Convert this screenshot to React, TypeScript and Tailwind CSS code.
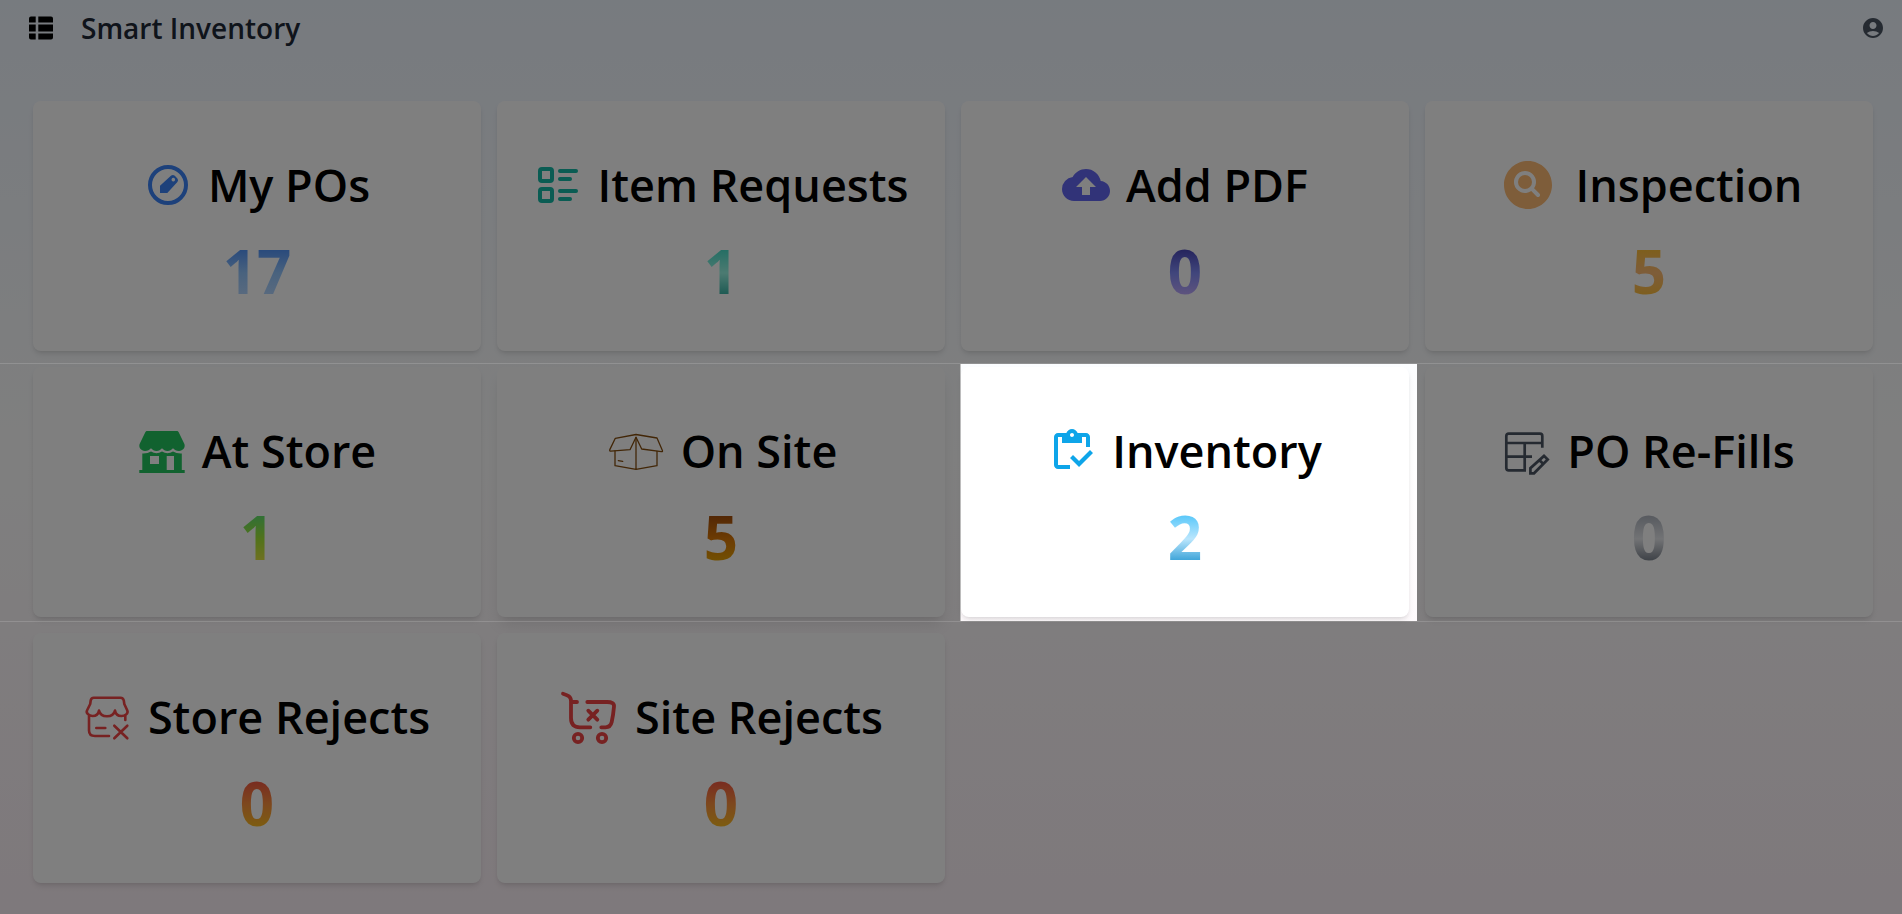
import type { ReactNode } from "react";
import { IoSearchCircle } from "react-icons/io5";
import { MdAccountCircle, MdCloudUpload, MdOutlineInventory } from "react-icons/md";
import { TbListDetails } from "react-icons/tb";

function MenuIcon() {
  return (
    <svg viewBox="0 0 24 24" className="size-6" fill="currentColor" aria-hidden="true">
      <path d="M2 .5h4.7v6H0v-4a2 2 0 0 1 2-2zM9.3 .5H22a2 2 0 0 1 2 2v4H9.3zM0 8.5h6.7v7H0zM9.3 8.5H24v7H9.3zM0 17.5h6.7v6H2a2 2 0 0 1-2-2zM9.3 17.5H24v4a2 2 0 0 1-2 2H9.3z" />
    </svg>
  );
}

function OrderIcon() {
  return (
    <svg viewBox="0 0 48 48" className="size-12 text-[#3b82f6]" aria-hidden="true">
      <circle cx="24" cy="24" r="18" fill="none" stroke="currentColor" strokeWidth="4" />
      <path
        fill="currentColor"
        fillRule="evenodd"
        d="M16 32V24.7L27.2 14.6Q29 13.4 30.8 14.8L33.4 17.4Q34.8 19.2 33.4 21L23.3 32ZM29.3 16.8a1.8 1.8 0 1 0 .01 0z"
      />
    </svg>
  );
}

function StoreIcon() {
  return (
    <svg viewBox="0 0 48 48" className="size-12 text-[#22c55e]" fill="currentColor" aria-hidden="true">
      <path d="M9.3 4h29.4c.9 0 1.6.5 2 1.3L46.4 17c1.2 3.4-1.4 6.9-5.4 6.9-2.6 0-4.6-1-6-2.6-1.4 1.6-3.2 2.6-5.5 2.6S25.4 22.9 24 21.3c-1.4 1.6-3.2 2.6-5.5 2.6s-4.1-1-5.5-2.6c-1.4 1.6-3.4 2.6-6 2.6-4 0-6.6-3.5-5.4-6.9L7.3 5.3C7.7 4.5 8.4 4 9.3 4z" />
      <path
        fillRule="evenodd"
        d="M4.3 26.5Q9.5 26.8 13 24.6Q18.5 27.8 24 24.6Q29.5 27.8 35 24.6Q38.8 26.8 43.8 26.5V43H46.7V46H1.3V43H4.3ZM12 29V37H21V29ZM28.7 29V43H36V29Z"
      />
    </svg>
  );
}

function BoxIcon() {
  return (
    <svg
      viewBox="0 0 60 60"
      className="size-[60px] text-[#854d0e]"
      fill="none"
      stroke="currentColor"
      strokeWidth="1.3"
      strokeLinejoin="round"
      strokeLinecap="round"
      aria-hidden="true"
    >
      <path d="M31 16.3L25 28.7L5.9 30.2Q4.3 30.2 4.8 28.6L10.3 17.3L31 13.5L52 17L57.4 29.4Q57.9 30.9 56.3 30.7L36.7 28Z" />
      <path d="M10 30V44.7L31 48.3L52 44.7V30.3M31 16.3V48.3M13.3 39.7L17.7 40.3" />
    </svg>
  );
}

function RefillIcon() {
  return (
    <svg viewBox="0 0 48 48" className="size-12 text-[#4b5563]" fill="none" stroke="currentColor" strokeWidth="2.7" aria-hidden="true">
      <path d="M39.3 20.7V9Q39.3 6.7 37 6.7H5.7Q3.3 6.7 3.3 9V41Q3.3 43.3 5.7 43.3H23M21.7 16V43.3M3.3 16H39.3M3.3 29.7H29" />
      <path d="M27.4 46.3V41.2L41 28.9L44.7 32.5L31 46.3ZM36.3 33L40.3 37" />
    </svg>
  );
}

function StoreRejectIcon() {
  return (
    <svg
      viewBox="0 0 48 48"
      className="size-12 text-[#ef4444]"
      fill="none"
      stroke="currentColor"
      strokeWidth="2.6"
      strokeLinecap="round"
      strokeLinejoin="round"
      aria-hidden="true"
    >
      <path d="M3 17.5C1.8 20 5 23 8.5 23C12.5 23 14.5 20.5 15 17.5C15.8 21 19 23.3 23 23.3S30.2 21 31 17.5C31.5 20.5 33.5 23 37.5 23C41 23 44.6 20.5 43.3 17.5L40.3 11L39.8 7.5Q39.2 4.7 36.5 4.7H9.8Q7.1 4.7 6.7 7.5L6.2 11Z" />
      <path d="M5 23V37.5Q5 43 11 43H25M41.3 22.5V27M12.3 35H21.3M30.3 32.7L43.3 45.3M43.3 32.7L30.3 45.3" />
    </svg>
  );
}

function SiteRejectIcon() {
  return (
    <svg
      viewBox="0 0 60 60"
      className="size-[60px] text-[#ef4444]"
      fill="none"
      stroke="currentColor"
      strokeWidth="3.8"
      strokeLinecap="round"
      strokeLinejoin="round"
      aria-hidden="true"
    >
      <path d="M4 6.7C9 8.3 12 9.5 12 14V31Q12 40.3 21 40.3H31.3M12 15H18M28.3 15H48Q55.5 15 55 19.5Q54.3 28 52.7 35Q51.5 40.3 46.5 40.3H42.3" />
      <path d="M29.3 23.7L38.3 32.7M38.3 23.7L29.3 32.7" />
      <circle cx="19" cy="51" r="4.2" />
      <circle cx="43" cy="51" r="4.2" />
    </svg>
  );
}

type Tile = {
  title: string;
  count: number;
  icon: ReactNode;
  gradient: string;
  shadow?: string;
  active?: boolean;
};

const tiles: Tile[] = [
  { title: "My POs", count: 17, icon: <OrderIcon />, gradient: "from-[#3b82f6] via-[#93c5fd] to-[#bfdbfe]" },
  {
    title: "Item Requests",
    count: 1,
    icon: <TbListDetails className="size-12 text-[#14b8a6]" />,
    gradient: "from-[#2dd4bf] via-[#99f6e4] to-[#0d9488]",
  },
  {
    title: "Add PDF",
    count: 0,
    icon: <MdCloudUpload className="size-12 text-[#6366f1]" />,
    gradient: "from-[#3730a3] via-[#818cf8] to-[#d8b4fe]",
  },
  {
    title: "Inspection",
    count: 5,
    icon: <IoSearchCircle className="size-16 text-[#fdba74]" />,
    gradient: "from-[#fbbf24] via-[#fdba74] to-[#fbbf24]",
  },
  { title: "At Store", count: 1, icon: <StoreIcon />, gradient: "from-[#4ade80] via-[#a3e635] to-[#fde047]" },
  {
    title: "On Site",
    count: 5,
    icon: <BoxIcon />,
    gradient: "from-[#92400e] via-[#d97706] to-[#eab308]",
    shadow: "shadow-lg",
  },
  {
    title: "Inventory",
    count: 2,
    icon: <MdOutlineInventory className="size-12 text-[#0ea5e9]" />,
    gradient: "from-[#38bdf8] via-[#bae6fd] to-[#0284c7]",
    active: true,
  },
  { title: "PO Re-Fills", count: 0, icon: <RefillIcon />, gradient: "from-[#9ca3af] via-[#e5e7eb] to-[#4b5563]" },
  { title: "Store Rejects", count: 0, icon: <StoreRejectIcon />, gradient: "from-[#ef4444] via-[#fb923c] to-[#facc15]" },
  { title: "Site Rejects", count: 0, icon: <SiteRejectIcon />, gradient: "from-[#ef4444] via-[#fb923c] to-[#facc15]" },
];

/* Dims the whole page except the tile it sits in. */
function Spotlight() {
  return (
    <span className="pointer-events-none absolute -top-[3px] -right-2 -bottom-1 left-0 z-50 shadow-[0_0_0_9999px_rgb(0_0_0/0.5)]">
      <span className="absolute -top-px -left-[200vw] h-px w-[400vw] bg-white/15" />
      <span className="absolute top-full -left-[200vw] h-px w-[400vw] bg-white/15" />
      <span className="absolute inset-y-0 -left-px w-px bg-white/50" />
    </span>
  );
}

function TileCard({ title, count, icon, gradient, shadow = "shadow-md", active }: Tile) {
  return (
    <a
      href="#"
      className={`relative flex h-[250px] flex-col items-center gap-[26px] rounded-lg bg-white pt-[54px] text-black ${shadow}`}
    >
      <h2 className="flex h-[60px] items-center gap-4 text-[45px] leading-[48px] font-semibold whitespace-nowrap">
        {icon}
        <span>{title}</span>
      </h2>
      <p className={`bg-linear-to-b/srgb bg-clip-text pb-1 text-6xl font-bold text-transparent ${gradient}`}>{count}</p>
      {active && <Spotlight />}
    </a>
  );
}

export default function App() {
  return (
    <div className="min-h-screen overflow-clip bg-linear-to-b/srgb from-[#eff6ff] via-white to-[#fdf2f8] font-['Open_Sans','Noto_Sans',sans-serif]">
      <header className="flex h-14 items-center justify-between pr-[17px] pl-[29px]">
        <div className="flex items-center gap-7">
          <button type="button" aria-label="Menu" className="text-black">
            <MenuIcon />
          </button>
          <h1 className="text-[28px] leading-9 font-semibold text-[#1f2937]">Smart Inventory</h1>
        </div>
        <button type="button" aria-label="Account" className="text-[#4b5563]">
          <MdAccountCircle className="size-6" />
        </button>
      </header>
      <main className="grid grid-cols-4 gap-4 pt-[45px] pr-[29px] pb-[31px] pl-[33px]">
        {tiles.map((tile) => (
          <TileCard key={tile.title} {...tile} />
        ))}
      </main>
    </div>
  );
}
